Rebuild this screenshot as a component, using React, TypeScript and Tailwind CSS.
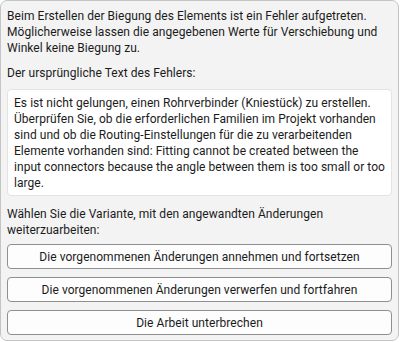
const intro = [
  "Beim Erstellen der Biegung des Elements ist ein Fehler aufgetreten.",
  "Möglicherweise lassen die angegebenen Werte für Verschiebung und",
  "Winkel keine Biegung zu.",
];

const errorLines = [
  "Es ist nicht gelungen, einen Rohrverbinder (Kniestück) zu erstellen.",
  "Überprüfen Sie, ob die erforderlichen Familien im Projekt vorhanden",
  "sind und ob die Routing-Einstellungen für die zu verarbeitenden",
  "Elemente vorhanden sind: Fitting cannot be created between the",
  "input connectors because the angle between them is too small or too",
  "large.",
];

const actions = [
  "Die vorgenommenen Änderungen annehmen und fortsetzen",
  "Die vorgenommenen Änderungen verwerfen und fortfahren",
  "Die Arbeit unterbrechen",
];

export default function App() {
  return (
    <div
      className="w-[400px] h-[342px] bg-white"
      style={{ fontFamily: 'Roboto, "Liberation Sans", Arial, sans-serif' }}
    >
      <div className="w-[399px] h-[341px] bg-[#f3f3f3] border border-[#c4c4c4] rounded-[7px] px-[6px] pt-[7px] text-[12px] leading-4 text-[#1b1b1b] tracking-[0.05px]">
        {/* Message */}
        <div>
          {intro.map((line, i) => (
            <div key={i} className="whitespace-nowrap">{line}</div>
          ))}
        </div>

        <div className="mt-[9px] whitespace-nowrap">Der ursprüngliche Text des Fehlers:</div>

        {/* Original error text */}
        <div className="mt-2 bg-white border border-[#e3e3e3] rounded-[4px] pl-[6px] pt-[5px] pb-[4px]">
          {errorLines.map((line, i) => (
            <div key={i} className="whitespace-nowrap">{line}</div>
          ))}
        </div>

        <div className="mt-[10px]">
          <div className="whitespace-nowrap">Wählen Sie die Variante, mit den angewandten Änderungen</div>
          <div className="whitespace-nowrap">weiterzuarbeiten:</div>
        </div>

        {/* Actions */}
        <div className="mt-[6px] flex flex-col gap-[8px]">
          {actions.map((label) => (
            <button
              key={label}
              className="h-[25px] w-full bg-[#fdfdfd] border border-[#8f8f8f] rounded-[4px] text-center text-[12px] text-[#1b1b1b]"
            >
              {label}
            </button>
          ))}
        </div>
      </div>
    </div>
  );
}
